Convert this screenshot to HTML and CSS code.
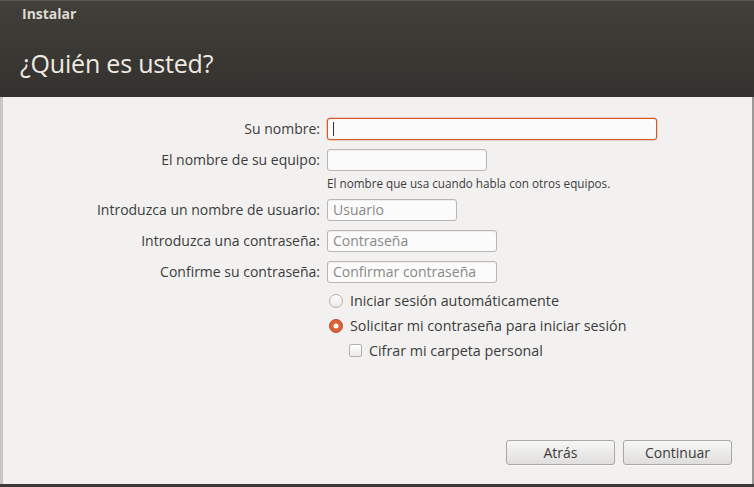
FILE: index.html
```html
<!DOCTYPE html>
<html lang="es">
<head>
<meta charset="utf-8">
<title>Instalar</title>
<link rel="stylesheet" href="styles.css">
</head>
<body>
<div class="window">
  <header class="header">
    <div class="titlebar">Instalar</div>
    <h1 class="heading">¿Quién es usted?</h1>
  </header>
  <main class="content">
    <div class="form">
      <label class="label">Su nombre:</label>
      <div class="field"><div class="input focus w330"><span class="caret"></span></div></div>

      <label class="label">El nombre de su equipo:</label>
      <div class="field"><div class="input w160"></div></div>

      <div class="hint">El nombre que usa cuando habla con otros equipos.</div>

      <label class="label">Introduzca un nombre de usuario:</label>
      <div class="field"><div class="input w130"><span class="ph">Usuario</span></div></div>

      <label class="label">Introduzca una contraseña:</label>
      <div class="field"><div class="input w170"><span class="ph">Contraseña</span></div></div>

      <label class="label">Confirme su contraseña:</label>
      <div class="field"><div class="input w170"><span class="ph">Confirmar contraseña</span></div></div>
    </div>

    <div class="options">
      <div class="opt"><span class="radio"></span><span>Iniciar sesión automáticamente</span></div>
      <div class="opt"><span class="radio on"></span><span>Solicitar mi contraseña para iniciar sesión</span></div>
      <div class="opt sub"><span class="check"></span><span>Cifrar mi carpeta personal</span></div>
    </div>

    <div class="spacer"></div>

    <div class="buttons">
      <button class="btn">Atrás</button>
      <button class="btn">Continuar</button>
    </div>
  </main>
</div>
</body>
</html>
```
FILE: styles.css
```css
* { box-sizing: border-box; }
html, body { margin: 0; padding: 0; }
body {
  width: 754px;
  height: 487px;
  overflow: hidden;
  font-family: "Open Sans", "DejaVu Sans", sans-serif;
  background: #3c3b37;
}
.window {
  width: 754px;
  height: 487px;
  display: flex;
  flex-direction: column;
  background: #3c3b37;
  border-bottom: 3px solid #3a3935;
}
.header {
  height: 97px;
  flex: none;
  background: linear-gradient(#403f3a, #33322e);
  border-top: 1px solid #5a5955;
  color: #dfdbd2;
}
.titlebar {
  padding: 3px 0 0 22px;
  height: 32px;
  font-size: 14px;
  font-weight: 700;
  color: #dfdbd2;
}
.heading {
  margin: 0;
  padding: 13px 0 0 20px;
  font-size: 25px;
  line-height: 34px;
  font-weight: 400;
  letter-spacing: -0.2px;
  color: #eeeae2;
}
.content {
  flex: 1;
  display: flex;
  flex-direction: column;
  background: #f2f1f0;
  border-left: 3px solid #c8c7c5;
  border-right: 2px solid #9a9996;
  padding-top: 21px;
  padding-bottom: 19px;
  color: #3c3c3c;
  font-size: 14px;
}
.form {
  display: grid;
  grid-template-columns: 317px auto;
  column-gap: 7px;
  row-gap: 9px;
  align-items: center;
}
.label {
  text-align: right;
  white-space: nowrap;
  line-height: 18px;
}
.field { display: flex; }
.input {
  height: 22px;
  border: 1px solid #b8b6b2;
  border-radius: 3px;
  background: #fbfbfb;
  box-shadow: inset 0 1px 1px rgba(0,0,0,0.06);
  display: flex;
  align-items: center;
  padding-left: 5px;
}
.input.focus {
  border-color: #d8582b;
  box-shadow: 0 0 0 0.5px rgba(216,88,43,0.5);
}
.caret {
  width: 1px;
  height: 14px;
  background: #333;
}
.w330 { width: 330px; }
.w160 { width: 160px; }
.w130 { width: 130px; }
.w170 { width: 170px; }
.ph { color: #8a8986; line-height: 18px; }
.hint {
  grid-column: 2;
  font-size: 11.7px;
  margin: -4px 0 0;
  line-height: 14px;
}
.options {
  margin-top: 5px;
  padding-left: 326px;
  display: flex;
  flex-direction: column;
}
.opt {
  display: flex;
  align-items: center;
  height: 25px;
  gap: 7px;
  font-size: 14.3px;
}
.opt.sub { padding-left: 20px; height: 25px; }
.radio {
  width: 14px;
  height: 14px;
  border-radius: 50%;
  border: 1px solid #b2b0ac;
  background: linear-gradient(#ffffff, #ebeae8);
  flex: none;
}
.radio.on {
  border-color: #b8492a;
  background: radial-gradient(circle, #ffffff 0, #ffffff 2.2px, #e0643a 2.8px, #dd5a30 100%);
}
.check {
  width: 13px;
  height: 13px;
  border-radius: 2px;
  border: 1px solid #b2b0ac;
  background: linear-gradient(#ffffff, #ebeae8);
  flex: none;
}
.spacer { flex: 1; }
.buttons {
  display: flex;
  justify-content: flex-end;
  gap: 8px;
  padding-right: 20px;
}
.btn {
  width: 109px;
  height: 25px;
  border: 1px solid #aaa8a4;
  border-radius: 3px;
  background: linear-gradient(#f7f7f6, #dfdedc);
  font-family: inherit;
  font-size: 14px;
  color: #3c3c3c;
  padding: 0;
  box-shadow: 0 1px 0 rgba(255,255,255,0.6);
}
```
